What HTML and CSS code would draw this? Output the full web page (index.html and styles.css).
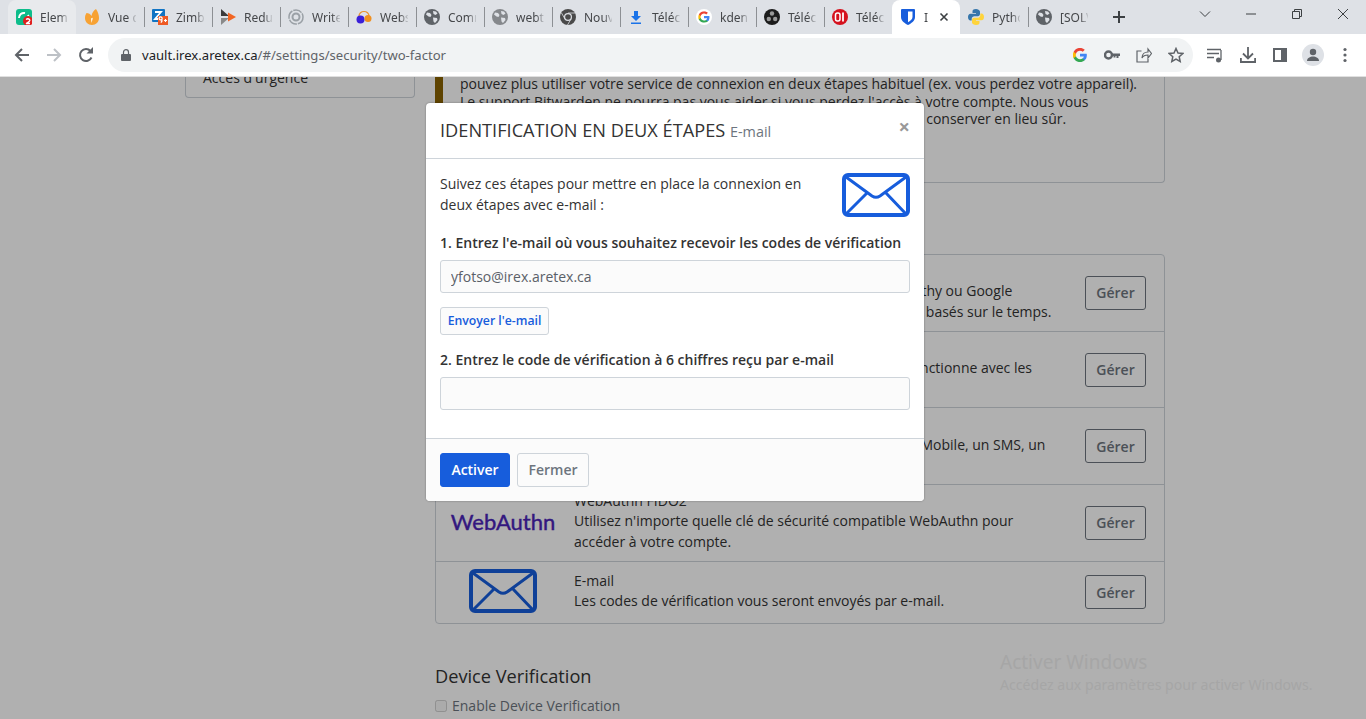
FILE: index.html
```html
<!DOCTYPE html>
<html lang="fr">
<head>
    <meta charset="UTF-8">
    <meta name="viewport" content="width=device-width, initial-scale=1.0">
    <title>Bitwarden - Identification en deux étapes</title>
    <link rel="stylesheet" href="styles.css">
</head>
<body>
    <svg class="defs" width="0" height="0" aria-hidden="true">
        <symbol id="globe" viewBox="0 0 16 16">
            <circle cx="8" cy="8" r="8"/>
            <path fill="#dee1e6" d="M3 3.500l3 .5 1.500 2-1 2-2-.5-2.500-2zM9 2l3 .5 1.500 2-2 1.500-2-1zM9 8.500l4 .5 .5 2-2.500 3-1.500-1.500z"/>
        </symbol>
        <symbol id="google" viewBox="0 0 16 16">
            <path fill="#4285f4" d="M15.700 8.200c0-.6-.1-1.100-.2-1.600H8v3h4.300c-.2 1-.7 1.800-1.600 2.400v2h2.600c1.500-1.400 2.400-3.400 2.400-5.800z"/>
            <path fill="#34a853" d="M8 16c2.200 0 4-.7 5.300-2l-2.600-2c-.7.5-1.600.8-2.700.8-2.100 0-3.900-1.400-4.500-3.300H.9v2.100C2.200 14.200 4.900 16 8 16z"/>
            <path fill="#fbbc05" d="M3.500 9.500c-.3-1-.3-2 0-3V4.400H.9c-1.200 2.300-1.200 4.900 0 7.200z"/>
            <path fill="#ea4335" d="M8 3.200c1.200 0 2.300.4 3.100 1.200l2.300-2.300C12 .8 10.200 0 8 0 4.900 0 2.200 1.800.9 4.400l2.600 2.100C4.100 4.600 5.900 3.200 8 3.200z"/>
        </symbol>
        <symbol id="envelope" viewBox="0 0 68 44">
            <rect x="2" y="2" width="64" height="40" rx="4" fill="none" stroke="currentColor" stroke-width="4"/>
            <path fill="none" stroke="currentColor" stroke-width="3" d="M4 4l26 19q4 2.500 8 0l26-19M4 41l21-21M64 41l-20-21"/>
        </symbol>
    </svg>

    <!-- Browser window -->
    <header class="browser">
        <div class="tabstrip">
            <div class="tab tab-hover">
                <svg class="favicon" viewBox="0 0 16 16"><rect width="16" height="16" rx="3" fill="#0dbd8b"/><path fill="none" stroke="#fff" stroke-width="2" d="M3 9a5 5 0 0 1 6-5M12 6a5 5 0 0 1-3 7"/><circle cx="12" cy="12" r="5" fill="#e02020"/><path fill="none" stroke="#fff" stroke-width="1.300" d="M10 10.500q2-1.500 3.500 0t-3.500 4h4"/></svg>
                <span class="tab-label">Elem</span>
            </div>
            <div class="tab">
                <svg class="favicon" viewBox="0 0 16 16"><path fill="#f7a234" d="M12 0c2 3 3 6 3 9 0 4-3 7-7 7s-7-3-7-7c0-2 .5-3.500 1.500-5 2 0 4 1 5 3 .5-3 2-5.500 4.500-7z"/><path fill="#fff" d="M7.500 14L7 9l1 .5 1-1z"/></svg>
                <span class="tab-label">Vue d</span>
            </div>
            <div class="tab">
                <svg class="favicon" viewBox="0 0 16 16"><rect width="13" height="13" rx="1" fill="#1174c4"/><path fill="none" stroke="#fff" stroke-width="1.800" d="M3 3h6L3 10h6"/><rect x="6" y="7" width="10" height="9" fill="#ef5a24"/><path fill="none" stroke="#fff" stroke-width="1.200" d="M10 10a1.500 1.500 0 1 0-.1.200v2l-1 1.500M12 11.500h3M13.500 10v3"/></svg>
                <span class="tab-label">Zimb</span>
            </div>
            <div class="tab">
                <svg class="favicon" viewBox="0 0 16 16"><path fill="#3a3a3a" d="M1 0l8 7H1z"/><path fill="#8a8a8a" d="M1 9h8l-8 7z"/><path fill="#f26522" d="M8 3.500L16 8l-8 4.500z"/></svg>
                <span class="tab-label">Redu</span>
            </div>
            <div class="tab">
                <svg class="favicon" viewBox="0 0 16 16"><circle cx="8" cy="8" r="7" fill="none" stroke="#9aa0a6" stroke-width="1.500" stroke-dasharray="9 1"/><circle cx="8" cy="8" r="3.500" fill="none" stroke="#9aa0a6" stroke-width="2"/></svg>
                <span class="tab-label">Write</span>
            </div>
            <div class="tab">
                <svg class="favicon" viewBox="0 0 16 16"><path fill="none" stroke="#e8912d" stroke-width="1.200" d="M3 9V7a5 4.500 0 0 1 10 0v2"/><circle cx="4.500" cy="10.500" r="4" fill="#3b1fd8"/><circle cx="12" cy="9.500" r="3.500" fill="#f09020"/></svg>
                <span class="tab-label">Webs</span>
            </div>
            <div class="tab">
                <svg class="favicon globe-dark"><use href="#globe"/></svg>
                <span class="tab-label">Comr</span>
            </div>
            <div class="tab">
                <svg class="favicon globe-grey"><use href="#globe"/></svg>
                <span class="tab-label">webt</span>
            </div>
            <div class="tab">
                <svg class="favicon" viewBox="0 0 16 16"><circle cx="8" cy="8" r="8" fill="#4a4a4a"/><circle cx="8" cy="8" r="4" fill="#dee1e6"/><circle cx="8" cy="8" r="2.800" fill="#4a4a4a"/><path fill="none" stroke="#dee1e6" stroke-width=".8" d="M8 4h7M5 10L1.500 4M11 10l-3.500 6"/></svg>
                <span class="tab-label">Nouv</span>
            </div>
            <div class="tab">
                <svg class="favicon" viewBox="0 0 16 16"><path fill="#1a73e8" d="M6 2h4v5h3l-5 5-5-5h3zM3 13.500h10V15H3z"/></svg>
                <span class="tab-label">Téléc</span>
            </div>
            <div class="tab">
                <svg class="favicon favicon-g" viewBox="-3 -3 22 22"><circle cx="8" cy="8" r="11" fill="#fff"/><use href="#google" width="16" height="16"/></svg>
                <span class="tab-label">kdenl</span>
            </div>
            <div class="tab">
                <svg class="favicon" viewBox="0 0 16 16"><circle cx="8" cy="8" r="8" fill="#1c1c1c"/><circle cx="8" cy="4.500" r="2.200" fill="#999"/><circle cx="4.800" cy="10" r="2.200" fill="#999"/><circle cx="11.200" cy="10" r="2.200" fill="#999"/></svg>
                <span class="tab-label">Téléc</span>
            </div>
            <div class="tab">
                <svg class="favicon" viewBox="0 0 16 16"><circle cx="8" cy="8" r="8" fill="#d5121e"/><rect x="3.500" y="4" width="4.500" height="8" rx="2" fill="none" stroke="#fff" stroke-width="1.500"/><path stroke="#fff" stroke-width="1.800" d="M11 3.500v9"/></svg>
                <span class="tab-label">Téléc</span>
            </div>
            <div class="tab tab-active">
                <svg class="favicon" viewBox="0 0 16 16"><path fill="#175ddc" d="M2 0h12a1 1 0 0 1 1 1v7c0 4-4 6.500-7 8-3-1.500-7-4-7-8V1a1 1 0 0 1 1-1z"/><path fill="#fff" d="M8 2.500h4.500V8c0 2.500-2.500 4-4.500 5.200z"/></svg>
                <span class="tab-label">I</span>
                <svg class="tab-close" viewBox="0 0 10 10"><path stroke="#3c4043" stroke-width="1.600" d="M1.500 1.500l7 7M8.500 1.500l-7 7"/></svg>
            </div>
            <div class="tab">
                <svg class="favicon" viewBox="0 0 16 16"><path fill="#3776ab" d="M8 0C5 0 4.500 1 4.500 2.500V4H8v.7H2.500C1 4.700 0 6 0 8s1 3.500 2.500 3.500h1.200V9.800c0-1.500 1.300-2.600 2.700-2.600h3.500c1.200 0 2.100-1 2.100-2.200V2.500C11.500 1 10 0 8 0z"/><path fill="#ffd43b" d="M8 16c3 0 3.500-1 3.500-2.500V12H8v-.7h5.500C15 11.300 16 10 16 8s-1-3.500-2.500-3.500h-1.200v1.700c0 1.500-1.300 2.600-2.700 2.600H6.100C4.900 8.800 4 9.800 4 11v2.500C4 15 6 16 8 16z"/></svg>
                <span class="tab-label">Pytho</span>
            </div>
            <div class="tab">
                <svg class="favicon globe-dark"><use href="#globe"/></svg>
                <span class="tab-label">[SOLV</span>
            </div>
            <svg class="new-tab" viewBox="0 0 12 12"><path stroke="#3c4043" stroke-width="2" d="M6 0v12M0 6h12"/></svg>
            <div class="window-controls">
                <svg viewBox="0 0 12 12"><path fill="none" stroke="#3c4043" d="M1 3.500l5 5 5-5"/></svg>
                <svg viewBox="0 0 12 12"><path stroke="#3c4043" d="M1 6h10"/></svg>
                <svg viewBox="0 0 12 12"><path fill="none" stroke="#3c4043" d="M1.500 3.500h7v7h-7zM3.500 3.500v-2h7v7h-2"/></svg>
                <svg viewBox="0 0 12 12"><path stroke="#3c4043" d="M1 1l10 10M11 1L1 11"/></svg>
            </div>
        </div>

        <div class="toolbar">
            <svg class="tool" viewBox="0 0 16 16"><path fill="none" stroke="#5f6368" stroke-width="2" d="M15 8H2M8 2L2 8l6 6"/></svg>
            <svg class="tool" viewBox="0 0 16 16"><path fill="none" stroke="#bdc1c6" stroke-width="2" d="M1 8h13M8 2l6 6-6 6"/></svg>
            <svg class="tool" viewBox="0 0 16 16"><path fill="none" stroke="#5f6368" stroke-width="2" d="M13.500 10.500A6 6 0 1 1 12.500 4"/><path fill="#5f6368" d="M15 0v6.500H8.500z"/></svg>
            <div class="omnibox">
                <svg class="lock" viewBox="0 0 10 12"><path fill="#5f6368" d="M1 5h8a1 1 0 0 1 1 1v5a1 1 0 0 1-1 1H1a1 1 0 0 1-1-1V6a1 1 0 0 1 1-1z"/><path fill="none" stroke="#5f6368" stroke-width="1.200" d="M2.500 5V3.200a2.500 2.500 0 0 1 5 0V5"/></svg>
                <span class="url"><span class="url-host">vault.irex.aretex.ca</span>/#/settings/security/two-factor</span>
                <div class="omnibox-actions">
                    <svg class="omni-icon" viewBox="-1 -1 18 18"><use href="#google" width="16" height="16"/></svg>
                    <svg class="omni-icon" viewBox="0 0 16 16"><circle cx="4.500" cy="8" r="3.500" fill="none" stroke="#5f6368" stroke-width="2.400"/><path fill="#5f6368" d="M7 6.500h9V9h-1.500v2h-2V9h-1v1.500H9.500V9H7z"/></svg>
                    <svg class="omni-icon" viewBox="0 0 16 16"><path fill="none" stroke="#5f6368" stroke-width="1.200" d="M5.500 4H1v11h11v-3M6 11c0-4 3-6 6-6V2l3.500 4.500L12 11V8c-3 0-5 1-6 3z"/></svg>
                    <svg class="omni-icon" viewBox="0 0 16 16"><path fill="none" stroke="#5f6368" stroke-width="1.500" d="M8 1.500l2 4.500 4.800.5-3.600 3.200 1 4.800L8 12.100l-4.200 2.400 1-4.800L1.200 6.500 6 6z"/></svg>
                </div>
            </div>
            <div class="toolbar-actions">
                <svg class="tool" viewBox="0 0 16 16"><path stroke="#5f6368" stroke-width="1.500" d="M0 2.500h14M0 6.500h12M0 10.500h7"/><path stroke="#5f6368" stroke-width="1.300" d="M14 3v10"/><circle cx="11.500" cy="13" r="2.500" fill="#5f6368"/></svg>
                <svg class="tool" viewBox="0 0 16 16"><path fill="none" stroke="#5f6368" stroke-width="1.800" d="M8 0v11M3 6.500L8 11.500l5-5M.9 11v4h14.200v-4"/></svg>
                <svg class="tool" viewBox="0 0 16 16"><path fill="none" stroke="#5f6368" stroke-width="2" d="M2 2h12v12H2z"/><path fill="#5f6368" d="M9 2h5v12H9z"/></svg>
                <div class="avatar"><svg viewBox="0 0 16 16"><circle cx="8" cy="5" r="3.200" fill="#5f6368"/><path fill="#5f6368" d="M2 14c0-3 3-4.500 6-4.500s6 1.500 6 4.500z"/></svg></div>
                <svg class="tool" viewBox="0 0 16 16"><g fill="#5f6368"><circle cx="8" cy="2.500" r="1.600"/><circle cx="8" cy="8" r="1.600"/><circle cx="8" cy="13.500" r="1.600"/></g></svg>
            </div>
        </div>
    </header>

    <div class="viewport">
        <!-- Settings page, scrolled down -->
        <div class="page">
            <aside class="side-card">
                <div class="side-item">Accès d'urgence</div>
            </aside>

            <main class="content">
                <div class="warning-box">
                    <span class="warning-line">pouvez plus utiliser votre service de connexion en deux étapes habituel (ex. vous perdez votre appareil).</span>
                    <span class="warning-line">Le support Bitwarden ne pourra pas vous aider si vous perdez l'accès à votre compte. Nous vous</span>
                    <span class="warning-line">recommandons d'écrire ou d'imprimer le code de récupération et de le conserver en lieu sûr.</span>
                </div>

                <h2 class="section-title">Fournisseurs</h2>
                <ul class="providers">
                    <li class="provider">
                        <div class="provider-logo"></div>
                        <div class="provider-text">
                            <div class="provider-name">Application d'authentification</div>
                            Utilisez une application d'authentification (comme Authy ou Google<br>
                            Authenticator) pour générer des codes de vérification basés sur le temps.
                        </div>
                        <button class="btn-manage">Gérer</button>
                    </li>
                    <li class="provider">
                        <div class="provider-logo"></div>
                        <div class="provider-text">
                            <div class="provider-name">Clé de sécurité YubiKey</div>
                            Utilisez une YubiKey pour accéder à votre compte. Fonctionne avec les<br>
                            appareils YubiKey 4, 4 Nano, 4C et NEO.
                        </div>
                        <button class="btn-manage">Gérer</button>
                    </li>
                    <li class="provider">
                        <div class="provider-logo"></div>
                        <div class="provider-text">
                            <div class="provider-name">Duo</div>
                            Vérifiez par Duo Security à l'aide de l'application Duo Mobile, un SMS, un<br>
                            appel téléphonique ou une clé de sécurité U2F.
                        </div>
                        <button class="btn-manage">Gérer</button>
                    </li>
                    <li class="provider">
                        <div class="provider-logo"><span class="webauthn-logo">WebAuthn</span></div>
                        <div class="provider-text">
                            <div class="provider-name">WebAuthn FIDO2</div>
                            Utilisez n'importe quelle clé de sécurité compatible WebAuthn pour<br>
                            accéder à votre compte.
                        </div>
                        <button class="btn-manage">Gérer</button>
                    </li>
                    <li class="provider provider-last">
                        <div class="provider-logo"><svg class="envelope"><use href="#envelope"/></svg></div>
                        <div class="provider-text">
                            <div class="provider-name">E-mail</div>
                            Les codes de vérification vous seront envoyés par e-mail.
                        </div>
                        <button class="btn-manage">Gérer</button>
                    </li>
                </ul>

                <h2 class="device-title">Device Verification</h2>
                <label class="device-check"><input type="checkbox" disabled>Enable Device Verification</label>
            </main>
        </div>

        <div class="backdrop"></div>

        <!-- Two-step login dialog -->
        <div class="modal">
            <div class="modal-header">
                <h1 class="modal-title">IDENTIFICATION EN DEUX ÉTAPES <small>E-mail</small></h1>
                <span class="modal-close">×</span>
            </div>
            <div class="modal-body">
                <div class="intro">
                    <p>Suivez ces étapes pour mettre en place la connexion en deux étapes avec e-mail :</p>
                    <svg class="envelope"><use href="#envelope"/></svg>
                </div>
                <label class="step-label" for="email">1. Entrez l'e-mail où vous souhaitez recevoir les codes de vérification</label>
                <input class="field" id="email" type="text" value="yfotso@irex.aretex.ca" readonly>
                <button class="btn-send">Envoyer l'e-mail</button>
                <label class="step-label step-two" for="code">2. Entrez le code de vérification à 6 chiffres reçu par e-mail</label>
                <input class="field" id="code" type="text">
            </div>
            <div class="modal-footer">
                <button class="btn-primary">Activer</button>
                <button class="btn-close">Fermer</button>
            </div>
        </div>

        <div class="watermark">
            <div class="watermark-title">Activer Windows</div>
            <div>Accédez aux paramètres pour activer Windows.</div>
        </div>
    </div>
</body>
</html>
```

FILE: styles.css
```css
/* Page reset */
* {
    box-sizing: border-box;
}

body {
    margin: 0;
    height: 100vh;
    display: flex;
    flex-direction: column;
    overflow: hidden;
    font-family: "Open Sans", sans-serif;
    font-size: 14px;
    line-height: 21px;
    color: #333;
    background: #fff;
}

.defs {
    position: absolute;
}

/* Browser tabs */
.browser {
    flex: none;
    font-family: "Noto Sans", "Open Sans", sans-serif;
}

.tabstrip {
    height: 34px;
    padding-left: 8px;
    display: flex;
    background: #dee1e6;
}

.tab {
    position: relative;
    width: 68px;
    height: 34px;
    padding: 0 8px;
    display: flex;
    align-items: center;
    gap: 8px;
    color: #45474a;
    font-size: 12px;
}

.tab::before {
    content: "";
    position: absolute;
    left: 0;
    top: 7px;
    height: 20px;
    border-left: 1px solid #8d9094;
}

.tab:first-child::before,
.tab:nth-child(2)::before,
.tab-active::before,
.tab-active + .tab::before {
    display: none;
}

.tab-hover {
    background: #e8eaed;
    border-radius: 8px 8px 0 0;
}

.tab-active {
    background: #fff;
    border-radius: 8px 8px 0 0;
}

.favicon {
    flex: none;
    width: 16px;
    height: 16px;
}

.globe-dark {
    fill: #5f6368;
}

.globe-grey {
    fill: #85888c;
}

.tab-label {
    flex: 1;
    min-width: 0;
    white-space: nowrap;
    -webkit-mask-image: linear-gradient(to right, #000 70%, rgba(0, 0, 0, 0.15));
    mask-image: linear-gradient(to right, #000 70%, rgba(0, 0, 0, 0.15));
}

.tab-close {
    flex: none;
    width: 10px;
    height: 10px;
    margin-right: 3px;
}

.new-tab {
    width: 12px;
    height: 12px;
    margin: 11px 0 0 17px;
}

.window-controls {
    margin-left: auto;
    padding: 8px 17px 0 0;
    display: flex;
    gap: 34px;
}

.window-controls svg {
    width: 12px;
    height: 12px;
}

/* Address bar row */
.toolbar {
    height: 43px;
    padding: 4px 0 5px 14px;
    display: flex;
    align-items: center;
    gap: 16px;
    background: #fff;
    border-bottom: 1px solid #e0e0e0;
}

.tool {
    flex: none;
    width: 16px;
    height: 16px;
}

.omnibox {
    flex: none;
    width: 1085px;
    height: 34px;
    margin-left: -2px;
    padding: 0 9px 0 13px;
    display: flex;
    align-items: center;
    background: #f1f3f4;
    border-radius: 17px;
}

.lock {
    width: 10px;
    height: 12px;
    margin-right: 11px;
}

.url {
    padding-top: 1px;
    font-family: "Noto Sans", sans-serif;
    font-size: 13.100px;
    color: #5f6368;
}

.url-host {
    color: #202124;
}

.omnibox-actions {
    margin-left: auto;
    display: flex;
    gap: 16px;
}

.omni-icon {
    width: 16px;
    height: 16px;
}

.toolbar-actions {
    margin-left: -2px;
    display: flex;
    align-items: center;
    gap: 16.500px;
}

.avatar {
    width: 22px;
    height: 22px;
    margin: 0 -3px;
    padding: 3px;
    border-radius: 50%;
    background: #dee1e6;
}

.avatar svg {
    display: block;
}

/* Settings page behind the dialog */
.viewport {
    position: relative;
    flex: 1;
    min-height: 0;
    overflow: hidden;
}

.page {
    display: flex;
    align-items: flex-start;
    gap: 20px;
    padding-left: 185px;
}

.side-card {
    width: 230px;
    height: 21px;
    border: 1px solid #ced4da;
    border-top: none;
    border-radius: 0 0 4px 4px;
}

.side-item {
    margin-top: -10px;
    padding-left: 17px;
}

.content {
    width: 730px;
}

.warning-box {
    height: 106px;
    padding: 0 15px 0 17px;
    border: 1px solid #ced4da;
    border-top: none;
    border-left: 8px solid #886200;
    border-radius: 0 0 4px 0;
}

.warning-line {
    display: block;
    position: relative;
    top: -2px;
    line-height: 17.500px;
    white-space: nowrap;
}

.section-title {
    margin: 0;
    height: 71px;
    padding-top: 40px;
    font-size: 18px;
    font-weight: 400;
}

.providers {
    margin: 0;
    padding: 0;
    list-style: none;
    border: 1px solid #ced4da;
    border-radius: 4px;
}

.provider {
    height: 76.700px;
    padding-right: 18px;
    display: flex;
    align-items: center;
    border-bottom: 1px solid #ced4da;
}

.provider-last {
    height: 61px;
    border-bottom: none;
}

.provider-logo {
    flex: none;
    width: 134px;
    margin-right: 4px;
    padding-bottom: 2px;
    display: flex;
    justify-content: center;
    align-items: center;
}

.provider-text {
    flex: 1;
    padding-bottom: 2px;
    white-space: nowrap;
}

.provider-name {
    line-height: 19px;
}

.webauthn-logo {
    font-family: Lato, sans-serif;
    font-size: 22px;
    font-weight: 400;
    -webkit-text-stroke: 0.4px #4a23b8;
    color: #4a23b8;
}

.envelope {
    flex: none;
    display: block;
    width: 68px;
    height: 44px;
    color: #175ddc;
}

.btn-manage {
    width: 61px;
    height: 34px;
    padding: 0;
    font: 600 14px "Open Sans", sans-serif;
    color: #6d757e;
    background: transparent;
    border: 1px solid #6d757e;
    border-radius: 3px;
}

.device-title {
    margin: 40.500px 0 7px;
    font-size: 18.200px;
    font-weight: 400;
    line-height: 24px;
}

.device-check {
    display: flex;
    align-items: center;
    gap: 5px;
    color: #6d757e;
}

.device-check input {
    width: 12px;
    height: 12px;
    margin: 0;
}

/* Dimmed layer */
.backdrop {
    position: absolute;
    inset: 0;
    background: #000;
    opacity: 0.31;
}

/* Dialog */
.modal {
    position: absolute;
    left: 426px;
    top: 26px;
    width: 498px;
    height: 398px;
    display: flex;
    flex-direction: column;
    background: #fff;
    border-radius: 4px;
    box-shadow: 0 0 2px rgba(0, 0, 0, 0.4);
}

.modal-header {
    position: relative;
    height: 56px;
    padding: 15px 14px 0;
    border-bottom: 1px solid #ced4da;
}

.modal-title {
    margin: 0;
    font-size: 18.200px;
    font-weight: 400;
    line-height: 24px;
}

.modal-title small {
    font-size: 14.400px;
    color: #6d757e;
}

.modal-close {
    position: absolute;
    right: 14px;
    top: 13px;
    font-size: 20px;
    font-weight: 700;
    color: #999;
}

.modal-body {
    flex: 1;
    padding: 14px 14px 0;
}

.intro {
    display: flex;
    justify-content: space-between;
    align-items: flex-start;
}

.intro p {
    width: 380px;
    margin: 0;
}

.step-label {
    display: block;
    margin-top: 15px;
    font-weight: 600;
}

.step-two {
    margin-top: 14px;
}

.field {
    display: block;
    width: 100%;
    height: 33px;
    margin-top: 7px;
    padding: 0 10px;
    font: 14px "Open Sans", sans-serif;
    color: #5a6068;
    background: #fbfbfb;
    border: 1px solid #ced4da;
    border-radius: 3px;
}

.btn-send {
    display: block;
    width: 109px;
    height: 28px;
    margin-top: 14px;
    padding: 0 0 2px;
    font: 600 12.250px "Open Sans", sans-serif;
    color: #175ddc;
    background: #fbfbfb;
    border: 1px solid #ced4da;
    border-radius: 3px;
}

.modal-footer {
    height: 63px;
    padding: 14px;
    display: flex;
    gap: 7px;
    background: #fbfbfb;
    border-top: 1px solid #ced4da;
    border-radius: 0 0 4px 4px;
}

.btn-primary,
.btn-close {
    height: 34px;
    padding: 0 0 2px;
    font: 600 14px "Open Sans", sans-serif;
    border-radius: 3px;
}

.btn-primary {
    width: 70px;
    color: #fff;
    background: #175ddc;
    border: 1px solid #175ddc;
}

.btn-close {
    width: 72px;
    color: #6d757e;
    background: #fbfbfb;
    border: 1px solid #ced4da;
}

/* Windows activation notice */
.watermark {
    position: absolute;
    left: 1000px;
    top: 572px;
    font-family: "Noto Sans", sans-serif;
    font-size: 14.100px;
    line-height: 20px;
    color: #a6a6a6;
    white-space: nowrap;
}

.watermark-title {
    font-size: 19px;
    line-height: 26px;
}
```
